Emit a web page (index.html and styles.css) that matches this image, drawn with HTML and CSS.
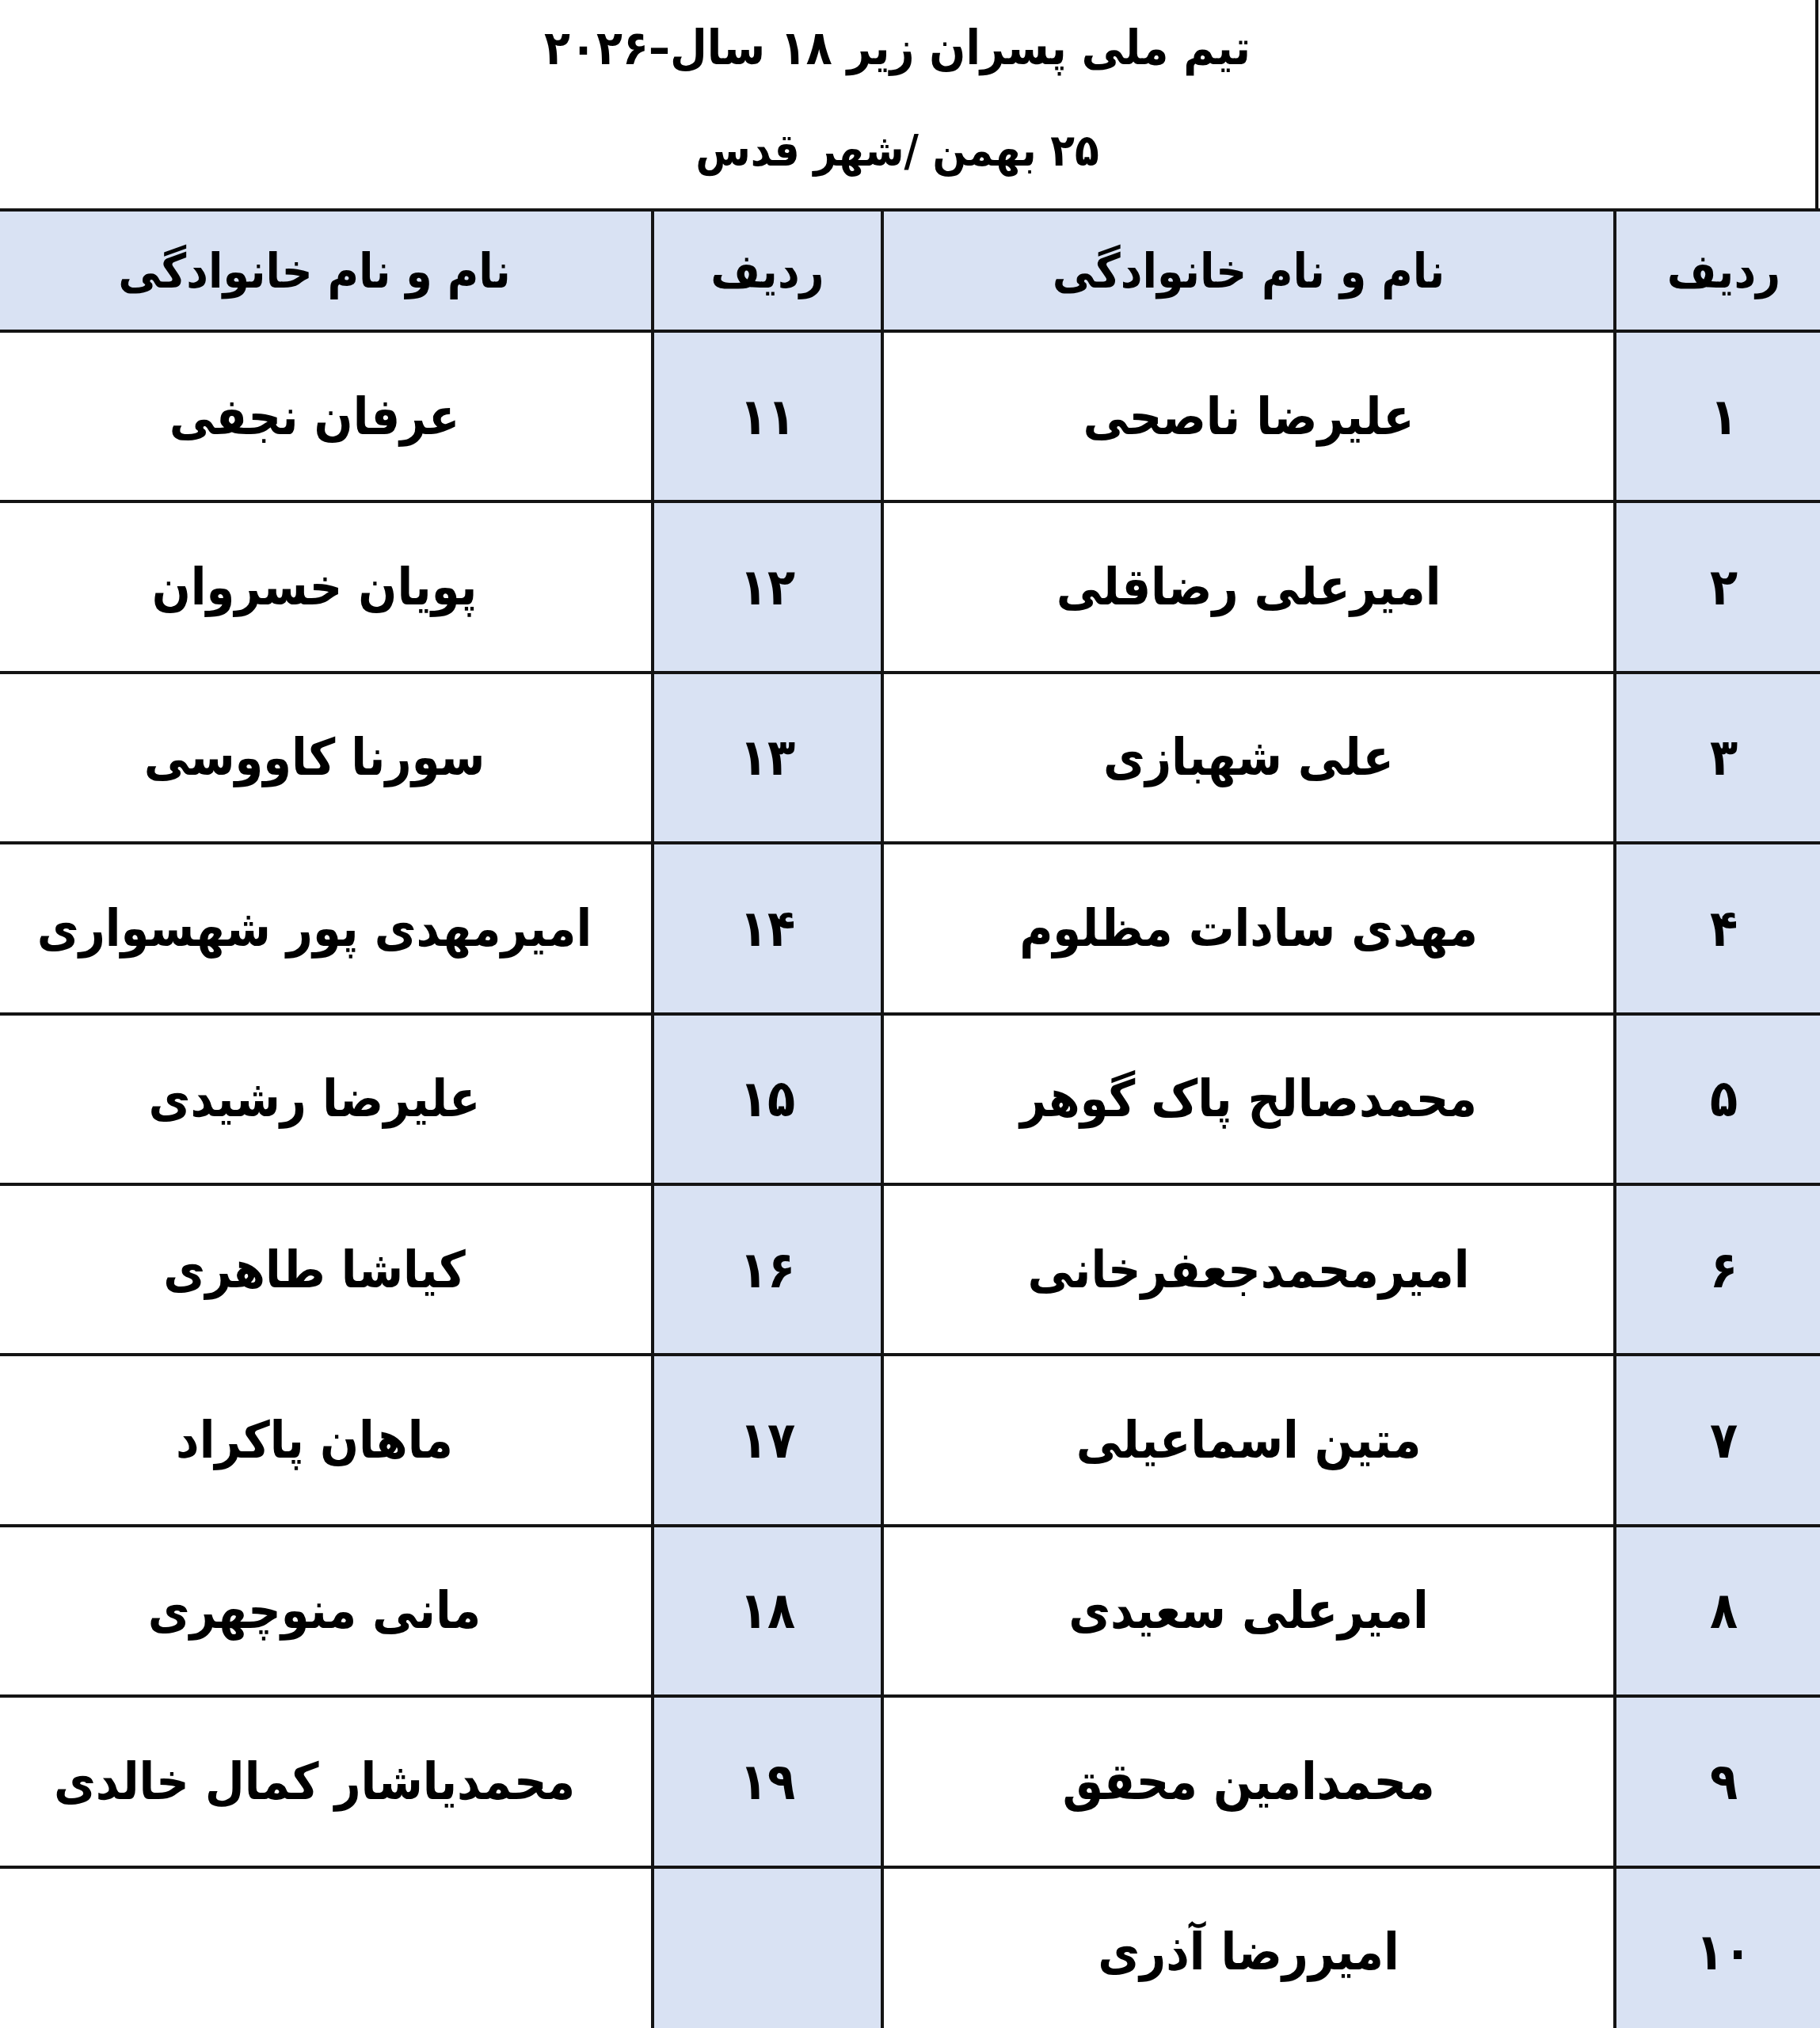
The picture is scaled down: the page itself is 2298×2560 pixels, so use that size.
FILE: index.html
```html
<!DOCTYPE html>
<html lang="fa" dir="rtl">
<head>
<meta charset="utf-8">
<title>تیم ملی پسران زیر ۱۸ سال</title>
<link rel="stylesheet" href="styles.css">
</head>
<body>
<div class="sheet">
  <header class="title-box">
    <h1 class="title">تیم ملی پسران زیر ۱۸ سال–۲۰۲۶</h1>
    <p class="subtitle">۲۵ بهمن /شهر قدس</p>
  </header>
  <table class="roster">
    <colgroup>
      <col class="col-num-a">
      <col class="col-name-a">
      <col class="col-num-b">
      <col class="col-name-b">
    </colgroup>
    <thead>
      <tr class="head-row">
        <th class="num">ردیف</th>
        <th class="name">نام و نام خانوادگی</th>
        <th class="num">ردیف</th>
        <th class="name">نام و نام خانوادگی</th>
      </tr>
    </thead>
    <tbody>
      <tr><td class="num">۱</td><td class="name">علیرضا ناصحی</td><td class="num">۱۱</td><td class="name">عرفان نجفی</td></tr>
      <tr><td class="num">۲</td><td class="name">امیرعلی رضاقلی</td><td class="num">۱۲</td><td class="name">پویان خسروان</td></tr>
      <tr><td class="num">۳</td><td class="name">علی شهبازی</td><td class="num">۱۳</td><td class="name">سورنا کاووسی</td></tr>
      <tr><td class="num">۴</td><td class="name">مهدی سادات مظلوم</td><td class="num">۱۴</td><td class="name">امیرمهدی پور شهسواری</td></tr>
      <tr><td class="num">۵</td><td class="name">محمدصالح پاک گوهر</td><td class="num">۱۵</td><td class="name">علیرضا رشیدی</td></tr>
      <tr><td class="num">۶</td><td class="name">امیرمحمدجعفرخانی</td><td class="num">۱۶</td><td class="name">کیاشا طاهری</td></tr>
      <tr><td class="num">۷</td><td class="name">متین اسماعیلی</td><td class="num">۱۷</td><td class="name">ماهان پاکراد</td></tr>
      <tr><td class="num">۸</td><td class="name">امیرعلی سعیدی</td><td class="num">۱۸</td><td class="name">مانی منوچهری</td></tr>
      <tr><td class="num">۹</td><td class="name">محمدامین محقق</td><td class="num">۱۹</td><td class="name">محمدیاشار کمال خالدی</td></tr>
      <tr class="last-row"><td class="num">۱۰</td><td class="name">امیررضا آذری</td><td class="num"></td><td class="name"></td></tr>
    </tbody>
  </table>
</div>
</body>
</html>
```

FILE: styles.css
```css
html, body {
  margin: 0;
  padding: 0;
  background: #ffffff;
  overflow: hidden;
}

body {
  width: 2298px;
  height: 2560px;
  font-family: "DejaVu Sans Condensed", "DejaVu Sans", sans-serif;
  font-weight: bold;
  color: #000000;
}

.sheet {
  margin-right: -18px;
  margin-left: -24px;
  width: 2340px;
}

.title-box {
  width: 2322px;
  height: 263px;
  box-sizing: border-box;
  border-right: 4px solid #111111;
  display: flex;
  flex-direction: column;
  align-items: center;
  margin-right: 20px;
}

.title {
  margin: 0;
  padding-top: 18px;
  height: 110px;
  font-size: 60px;
  line-height: 84px;
  font-weight: bold;
}

.subtitle {
  margin: 0;
  padding-top: 20px;
  font-size: 56px;
  line-height: 84px;
}

.roster {
  border-collapse: collapse;
  width: 2344px;
  table-layout: fixed;
}

.col-num-a { width: 275px; }
.col-name-a { width: 925px; }
.col-num-b { width: 290px; }
.col-name-b { width: 854px; }

.roster th,
.roster td {
  border: 4px solid #141414;
  padding: 0;
  text-align: center;
  vertical-align: middle;
  font-size: 64px;
  font-weight: bold;
}

.roster th {
  background: #d9e2f3;
  font-size: 60px;
}

.roster td.num {
  background: #d9e2f3;
}

.head-row {
  height: 153px;
}

.roster tbody tr {
  height: 215.4px;
}
```
